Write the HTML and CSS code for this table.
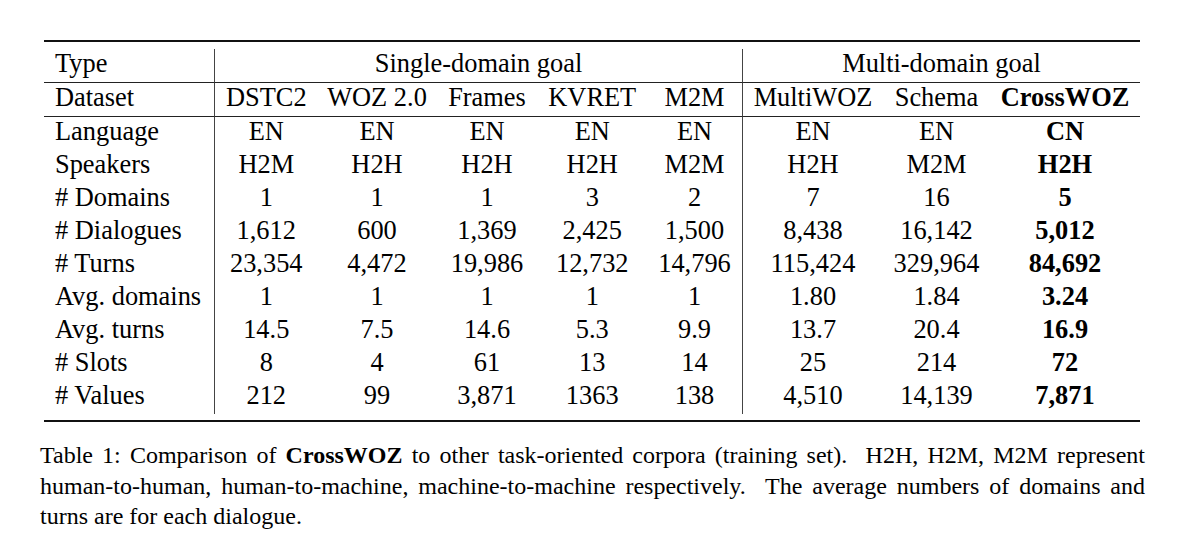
FILE: index.html
```html
<!DOCTYPE html>
<html lang="en">
<head>
<meta charset="utf-8">
<title>Table 1: Comparison of CrossWOZ</title>
<link rel="stylesheet" href="styles.css">
</head>
<body>
<div class="page">
  <div class="figure">
    <div class="rule-thick"></div>
    <table class="data">
      <colgroup>
        <col class="c0"><col class="c1"><col class="c2"><col class="c3"><col class="c4"><col class="c5"><col class="c6"><col class="c7"><col class="c8">
      </colgroup>
      <thead>
        <tr class="hrow">
          <th class="lab">Type</th>
          <th class="vl" colspan="5">Single-domain goal</th>
          <th class="vl" colspan="3">Multi-domain goal</th>
        </tr>
        <tr class="hrow">
          <th class="lab">Dataset</th>
          <th class="vl">DSTC2</th>
          <th>WOZ 2.0</th>
          <th>Frames</th>
          <th>KVRET</th>
          <th>M2M</th>
          <th class="vl">MultiWOZ</th>
          <th>Schema</th>
          <th class="b">CrossWOZ</th>
        </tr>
      </thead>
      <tbody>
        <tr><td class="lab">Language</td><td class="vl">EN</td><td>EN</td><td>EN</td><td>EN</td><td>EN</td><td class="vl">EN</td><td>EN</td><td class="b">CN</td></tr>
        <tr><td class="lab">Speakers</td><td class="vl">H2M</td><td>H2H</td><td>H2H</td><td>H2H</td><td>M2M</td><td class="vl">H2H</td><td>M2M</td><td class="b">H2H</td></tr>
        <tr><td class="lab"># Domains</td><td class="vl">1</td><td>1</td><td>1</td><td>3</td><td>2</td><td class="vl">7</td><td>16</td><td class="b">5</td></tr>
        <tr><td class="lab"># Dialogues</td><td class="vl">1,612</td><td>600</td><td>1,369</td><td>2,425</td><td>1,500</td><td class="vl">8,438</td><td>16,142</td><td class="b">5,012</td></tr>
        <tr><td class="lab"># Turns</td><td class="vl">23,354</td><td>4,472</td><td>19,986</td><td>12,732</td><td>14,796</td><td class="vl">115,424</td><td>329,964</td><td class="b">84,692</td></tr>
        <tr><td class="lab">Avg. domains</td><td class="vl">1</td><td>1</td><td>1</td><td>1</td><td>1</td><td class="vl">1.80</td><td>1.84</td><td class="b">3.24</td></tr>
        <tr><td class="lab">Avg. turns</td><td class="vl">14.5</td><td>7.5</td><td>14.6</td><td>5.3</td><td>9.9</td><td class="vl">13.7</td><td>20.4</td><td class="b">16.9</td></tr>
        <tr><td class="lab"># Slots</td><td class="vl">8</td><td>4</td><td>61</td><td>13</td><td>14</td><td class="vl">25</td><td>214</td><td class="b">72</td></tr>
        <tr><td class="lab"># Values</td><td class="vl">212</td><td>99</td><td>3,871</td><td>1363</td><td>138</td><td class="vl">4,510</td><td>14,139</td><td class="b">7,871</td></tr>
      </tbody>
    </table>
    <div class="rule-thick rule-bottom"></div>
  </div>
  <div class="caption">
    <div class="cline">Table 1: Comparison of <b>CrossWOZ</b> to other task-oriented corpora (training set).&nbsp; H2H, H2M, M2M represent</div>
    <div class="cline">human-to-human, human-to-machine, machine-to-machine respectively.&nbsp; The average numbers of domains and</div>
    <div class="cline last">turns are for each dialogue.</div>
  </div>
</div>
</body>
</html>
```

FILE: styles.css
```css
html, body {
  margin: 0;
  padding: 0;
  background: #ffffff;
}

body {
  font-family: "Liberation Serif", "Times New Roman", serif;
  color: #000000;
}

.page {
  padding: 40px 0 0 40px;
  width: 1105px;
}

.figure {
  margin-left: 4px;
  width: 1096px;
}

.rule-thick {
  height: 2px;
  background: #111111;
}

.rule-bottom {
  margin-top: 6px;
}

.data {
  margin-top: 7px;
  width: 1096px;
  table-layout: fixed;
  border-collapse: separate;
  border-spacing: 0;
  font-size: 26.4px;
}

.c0 { width: 170px; }
.c1 { width: 103.5px; }
.c2 { width: 119px; }
.c3 { width: 101px; }
.c4 { width: 109.5px; }
.c5 { width: 95px; }
.c6 { width: 141px; }
.c7 { width: 107px; }
.c8 { width: 150px; }

.data th,
.data td {
  box-sizing: border-box;
  height: 33px;
  padding: 0;
  line-height: 29px;
  vertical-align: top;
  text-align: center;
  font-weight: normal;
  white-space: nowrap;
}

.data .hrow th {
  height: 34px;
  border-bottom: 1px solid #222222;
}

.data .lab {
  text-align: left;
  padding-left: 11px;
}

.data .vl {
  border-left: 1px solid #444444;
}

.data .b {
  font-weight: bold;
}

.caption {
  margin-top: 18px;
  font-size: 24px;
  line-height: 30.5px;
}

.cline {
  text-align: justify;
  text-align-last: justify;
  white-space: nowrap;
}

.cline.last {
  text-align: left;
  text-align-last: left;
}
```
